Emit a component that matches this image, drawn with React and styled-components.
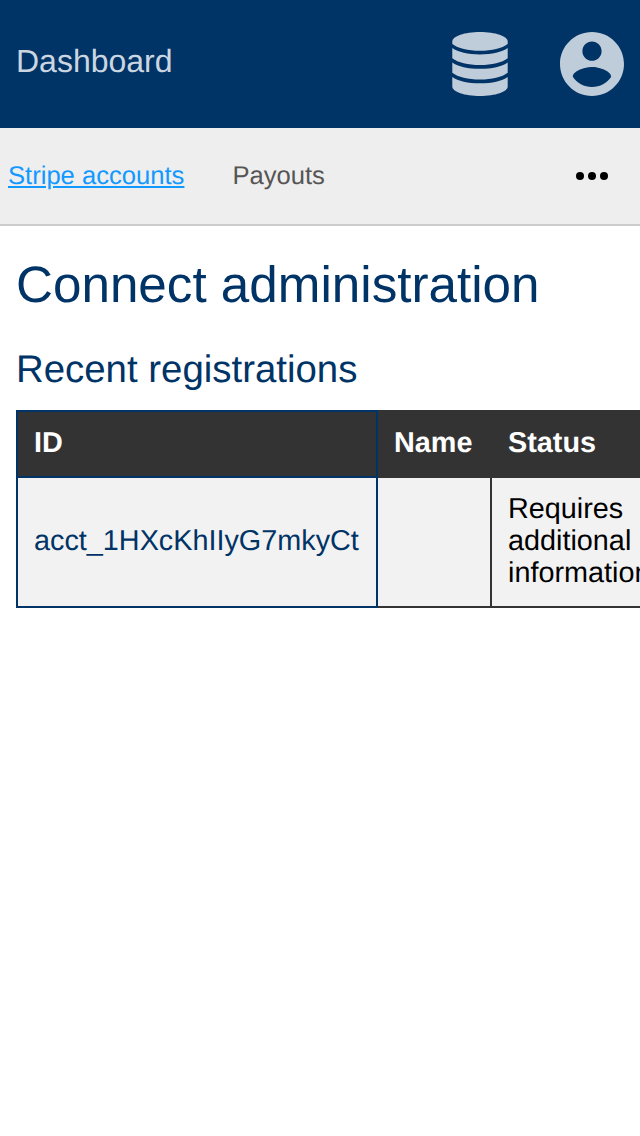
import React from "react";
import styled, { createGlobalStyle } from "styled-components";

const navy = "#003366";

const GlobalStyle = createGlobalStyle`
  * { box-sizing: border-box; }
  html, body { margin: 0; padding: 0; background: #fff; overflow: hidden; }
  body {
    font-family: "Liberation Sans", Arial, sans-serif;
    text-rendering: geometricPrecision;
    color: #000;
  }
`;

const Page = styled.div`
  width: 100%;
  height: 1136px;
  overflow: hidden;
  background: #fff;
`;

const Header = styled.header`
  display: flex;
  align-items: center;
  justify-content: space-between;
  height: 128px;
  padding: 0 16px;
  background: ${navy};
`;

const Brand = styled.a`
  padding-bottom: 6px;
  font-size: 32px;
  line-height: 36px;
  color: #ccd6e0;
`;

const HeaderIcons = styled.div`
  display: flex;
  align-items: center;
  gap: 52px;
`;

const Icon = styled.svg`
  display: block;
  width: ${(p) => p.$width}px;
  height: 64px;
  fill: #bfccd9;
`;

const Nav = styled.nav`
  display: flex;
  align-items: center;
  gap: 48px;
  height: 98px;
  padding: 0 32px 0 8px;
  background: #eee;
  border-bottom: 2px solid #ccc;
`;

const NavLink = styled.a`
  font-size: 25.6px;
  line-height: 30px;
  color: ${(p) => (p.$active ? "#1199ff" : "#555")};
  text-decoration: ${(p) => (p.$active ? "underline" : "none")};
`;

const MoreButton = styled.button`
  display: flex;
  gap: 4px;
  margin: 0 0 0 auto;
  padding: 0;
  border: 0;
  background: none;
`;

const Dot = styled.span`
  width: 8px;
  height: 8px;
  border-radius: 50%;
  background: #000;
`;

const Main = styled.main`
  padding: 30px 16px 0;
`;

const Title = styled.h1`
  margin: 0;
  font-size: 51.2px;
  font-weight: 400;
  line-height: 58px;
  color: ${navy};
`;

const Subtitle = styled.h2`
  margin: 34px 0 18px;
  font-size: 38.4px;
  font-weight: 400;
  line-height: 44px;
  color: ${navy};
`;

const Table = styled.table`
  width: 652px;
  table-layout: fixed;
  border-collapse: collapse;
  font-size: 28.8px;
  line-height: 32px;
`;

const Column = styled.col`
  width: ${(p) => p.$width}px;
`;

const Cell = styled.td`
  padding: 15px 16px 17px;
  border: 2px solid ${(p) => (p.$primary ? navy : "#333")};
  background: #f2f2f2;
  color: ${(p) => (p.$primary ? navy : "#000")};
  text-align: left;
  vertical-align: middle;
`;

const HeadCell = styled(Cell)`
  background: #333;
  color: #fff;
  font-weight: 700;
`;

const DatabaseIcon = () => (
  <Icon $width={56} viewBox="0 0 56 64" aria-hidden="true">
    <path d="M28 0C43.5 0 55.7 4.2 55.7 9.5V11.9C50 16.2 40 18.7 28 18.7S6 16.2 .3 11.9V9.5C.3 4.2 12.5 0 28 0Z" />
    <path d="M.3 16C6 20.1 16 22.4 28 22.4S50 20.1 55.7 16V26.3C50 30.7 40 33.1 28 33.1S6 30.7 .3 26.3Z" />
    <path d="M.3 30.5C6 34.6 16 36.8 28 36.8S50 34.6 55.7 30.5V40.8C50 45.2 40 47.6 28 47.6S6 45.2 .3 40.8Z" />
    <path d="M.3 45C6 49.1 16 51.3 28 51.3S50 49.1 55.7 45V54.5C55.7 59.8 43.5 64 28 64S.3 59.8 .3 54.5Z" />
  </Icon>
);

const AccountIcon = () => (
  <Icon $width={64} viewBox="2 2 20 20" aria-hidden="true">
    <path d="M12 2C6.48 2 2 6.48 2 12s4.48 10 10 10 10-4.48 10-10S17.52 2 12 2zm0 3c1.66 0 3 1.34 3 3s-1.34 3-3 3-3-1.34-3-3 1.34-3 3-3zm0 14.2c-2.5 0-4.71-1.28-6-3.22.03-1.99 4-3.08 6-3.08 1.99 0 5.97 1.09 6 3.08-1.29 1.94-3.5 3.22-6 3.22z" />
  </Icon>
);

export default function App() {
  return (
    <Page>
      <GlobalStyle />
      <Header>
        <Brand>Dashboard</Brand>
        <HeaderIcons>
          <DatabaseIcon />
          <AccountIcon />
        </HeaderIcons>
      </Header>
      <Nav>
        <NavLink $active>Stripe accounts</NavLink>
        <NavLink>Payouts</NavLink>
        <MoreButton aria-label="More">
          <Dot />
          <Dot />
          <Dot />
        </MoreButton>
      </Nav>
      <Main>
        <Title>Connect administration</Title>
        <Subtitle>Recent registrations</Subtitle>
        <Table>
          <colgroup>
            <Column $width={360} />
            <Column $width={114} />
            <Column $width={176} />
          </colgroup>
          <thead>
            <tr>
              <HeadCell as="th" $primary>ID</HeadCell>
              <HeadCell as="th">Name</HeadCell>
              <HeadCell as="th">Status</HeadCell>
            </tr>
          </thead>
          <tbody>
            <tr>
              <Cell $primary>acct_1HXcKhIIyG7mkyCt</Cell>
              <Cell />
              <Cell>Requires additional information</Cell>
            </tr>
          </tbody>
        </Table>
      </Main>
    </Page>
  );
}
